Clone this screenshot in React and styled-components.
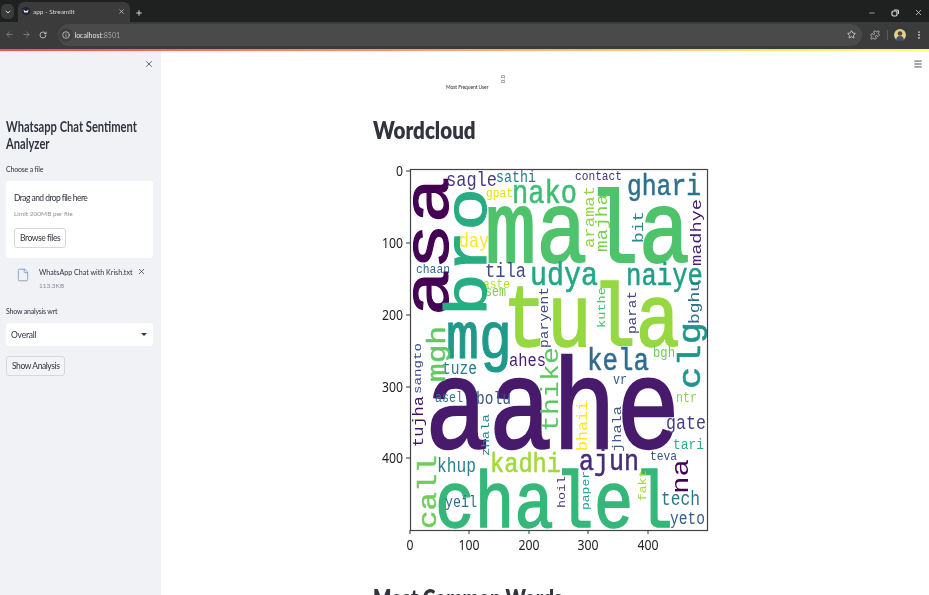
import React from "react";
import styled, { createGlobalStyle, css } from "styled-components";
import { ChevronDown, X, Plus, ArrowLeft, ArrowRight, RotateCw, Info, Star, Puzzle, EllipsisVertical, Minus, File, Menu } from "lucide-react";

const Global = createGlobalStyle`
  html, body { margin: 0; padding: 0; width: 929px; height: 595px; overflow: hidden; background: #fff; }
  * { box-sizing: border-box; }
  body { font-family: "Lato", "Noto Sans", sans-serif; color: #31333f; }
`;
const narrow = css`
  white-space: nowrap; transform-origin: left center; transform: scaleX(${p => p.$sx || 0.86});
`;

const Page = styled.div`
  width: 929px; height: 595px; display: flex; flex-direction: column; overflow: hidden;
`;
const Chrome = styled.div`filter: blur(0.45px); flex: none;`;
const TabStrip = styled.div`
  height: 22px; background: #1f2120; display: flex; align-items: flex-end; color: #d6d6d6;
`;
const TabSearch = styled.div`
  width: 13px; height: 15px; margin: 0 4px 3px 1px; border-radius: 5px; background: #3a3b3b;
  display: flex; align-items: center; justify-content: center;
`;
const Tab = styled.div`
  width: 112px; height: 20px; background: #3b3b3b; border-radius: 6px 6px 0 0;
  display: flex; align-items: center; padding: 0 5px 2px 4px; font-size: 6.5px; color: #d8d8d8;
`;
const Favicon = styled.svg`width: 8px; height: 8px; margin-right: 3px; flex: none;`;
const TabTitle = styled.span`flex: 1;`;
const NewTab = styled.div`margin: 0 0 5px 5px; display: flex;`;
const Spacer = styled.div`flex: 1;`;
const WindowButtons = styled.div`
  display: flex; gap: 15px; margin: 0 6px 5px 0; align-items: center; color: #d8d8d8;
`;
const Toolbar = styled.div`
  height: 27px; background: #3b3b3b; display: flex; align-items: center; padding: 0 5px 2px 4.5px; color: #c4c4c4; gap: 8px;
`;
const NavIcon = styled.span`display: flex; color: ${p => p.$dim ? "#7b7b7b" : "#c8c8c8"};`;
const UrlBar = styled.div`
  flex: 1; height: 22px; margin-left: 3px; background: #4a4a4a; border-radius: 11px;
  display: flex; align-items: center; padding: 0 6px 0 1px; font-size: 7px; color: #e4e4e4; gap: 2px;
`;
const UrlInfo = styled.span`
  width: 14px; height: 14px; border-radius: 50%; background: #3f3f3f; display: flex; align-items: center; justify-content: center;
`;
const UrlPort = styled.span`color: #a9a9a9;`;
const ToolbarDivider = styled.span`width: 1px; height: 10px; background: #5a5a5a; margin: 0 -2px 0 -1px;`;
const Avatar = styled.svg`width: 12px; height: 12px; flex: none;`;
const Decoration = styled.div`
  height: 2px; flex: none; background: linear-gradient(90deg, #ff4b4b, #fffd80);
`;
const Body = styled.div`flex: 1; display: flex; min-height: 0; filter: blur(0.25px);`;

const Sidebar = styled.aside`
  width: 161px; flex: none; background: #f0f2f6; position: relative; padding: 67px 8px 0 6px;
`;
const SideClose = styled.span`position: absolute; top: 8px; left: 144px; display: flex; color: #3a3c46;`;
const AppTitle = styled.h2`
  margin: 0 0 12px; width: 178px; font-size: 14.5px; line-height: 17px; font-weight: 700; color: #31333f;
  transform-origin: left center; transform: scaleX(0.77);
`;
const FieldLabel = styled.div`font-size: 7px; line-height: 10px; color: #31333f; margin-bottom: 7px; letter-spacing: -0.2px;`;
const Dropzone = styled.div`
  background: #fff; border-radius: 3px; height: 77px; padding: 12px 8px 0; margin-bottom: 8px;
`;
const DropTitle = styled.div`font-size: 8.5px; line-height: 11px; color: #31333f; letter-spacing: -0.55px;`;
const DropHint = styled.div`font-size: 6.5px; line-height: 9px; color: #8f919a; margin: 5px 0 10px;`;
const Button = styled.div`
  display: flex; width: fit-content; align-items: center; justify-content: center; height: 20px; padding: 0 5px;
  background: ${p => p.$tint ? "#f3f4f7" : "#fff"}; border: 1px solid #d6d8de; border-radius: 3px; font-size: 8.5px; color: #31333f;
  letter-spacing: -0.42px;
`;
const FileRow = styled.div`display: flex; align-items: flex-start; padding-left: 10px; height: 40px;`;
const FileIcon = styled.span`display: flex; color: #8a9cc2; margin: 2px 0 0 0; width: 23px;`;
const FileInfo = styled.div`flex: 1; min-width: 0;`;
const FileName = styled.div`font-size: 8px; line-height: 12px; color: #31333f; ${narrow}`;
const FileSize = styled.div`font-size: 6.5px; line-height: 10px; color: #8a8c95; margin-top: 3px;`;
const FileClose = styled.span`display: flex; color: #3a3c46; margin: 1px 7px 0 0;`;
const Select = styled.div`
  height: 23px; background: #fff; border-radius: 3px; display: flex; align-items: center; justify-content: space-between;
  padding: 0 6px 0 5px; font-size: 8.5px; color: #31333f; margin-bottom: 10px; letter-spacing: -0.2px;
`;
const Caret = styled.span`
  width: 0; height: 0; border-left: 3px solid transparent; border-right: 3px solid transparent; border-top: 3.5px solid #31333f;
`;

const Main = styled.main`
  flex: 1; position: relative; background: #fff; overflow: hidden; padding: 0 0 0 212px;
`;
const MenuButton = styled.span`position: absolute; top: 8px; right: 6px; display: flex; color: #31333f;`;
const TopChart = styled.div`height: 63px; position: relative;`;
const TopCaption = styled.div`position: absolute; left: 73px; top: 33px; font-size: 5px; line-height: 6px; color: #31333f; white-space: nowrap; letter-spacing: -0.08px;`;
const TopGlyph = styled.div`position: absolute; left: 126px; top: 25px; font-size: 6px; line-height: 6px; color: #555; transform: rotate(-90deg);`;
const Heading = styled.h2`
  margin: 0; font-size: 24px; line-height: 32px; font-weight: 800; color: #31333f; ${narrow}
`;
const ChartSvg = styled.svg`display: block; width: 360px; height: 395px; margin: 14px 0 27px; filter: blur(0.3px);`;

/* [word, left, right, baseline, colour] */
const H = [
  ["mala", 485, 690, 262, "#4ec36b"],
  ["tula", 503, 680, 346, "#95d840"],
  ["aahe", 425, 680, 448, "#481a6c"],
  ["chalel", 435, 673, 527, "#35b779"],
  ["mg", 446, 512, 358, "#1f9a8a"],
  ["nako", 512, 577, 203, "#3dbc74"],
  ["sagle", 446, 497, 186, "#443983"],
  ["sathi", 496, 536, 182, "#2a788e"],
  ["gpat", 486, 513, 197, "#dfe318"],
  ["day", 459, 489, 247, "#fde725"],
  ["contact", 575, 622, 180, "#46337e"],
  ["ghari", 627, 701, 195, "#2c728e"],
  ["udya", 530, 598, 285, "#22a884"],
  ["naiye", 626, 703, 285, "#1f9f88"],
  ["tila", 485, 526, 277, "#3e4989"],
  ["chaan", 416, 450, 273, "#31688e"],
  ["aste", 483, 510, 288, "#b5de2b"],
  ["sem", 485, 506, 296, "#7ad151"],
  ["kela", 587, 649, 370, "#2f6c8e"],
  ["ahes", 509, 546, 366, "#481f70"],
  ["bgh", 653, 675, 357, "#6ccd5a"],
  ["vr", 613, 627, 384, "#3b528b"],
  ["ntr", 676, 697, 402, "#86d549"],
  ["gate", 666, 706, 429, "#433e85"],
  ["tari", 673, 704, 449, "#29af7f"],
  ["teva", 650, 677, 460, "#3b528b"],
  ["ajun", 579, 639, 470, "#472c7a"],
  ["tuze", 442, 477, 374, "#2a788e"],
  ["asel", 435, 463, 402, "#2c7c8e"],
  ["bolu", 476, 511, 404, "#39568c"],
  ["khup", 437, 476, 472, "#26828e"],
  ["kadhi", 490, 561, 472, "#a0da39"],
  ["yeil", 445, 477, 507, "#2f6c8e"],
  ["tech", 661, 700, 505, "#2a788e"],
  ["yeto", 670, 705, 524, "#355f8d"],
];
/* [word, baselineX, bottom, top, colour] */
const V = [
  ["asa", 448, 316, 177, "#440154"],
  ["bro", 486, 316, 188, "#27ad81"],
  ["mgh", 445, 382, 326, "#5ec962"],
  ["aramat", 594, 248, 186, "#8fd744"],
  ["majha", 607, 252, 194, "#7ad151"],
  ["bit", 643, 243, 211, "#2c8a8c"],
  ["madhye", 701, 266, 199, "#482173"],
  ["paryent", 548, 348, 287, "#3f4788"],
  ["kuthe", 605, 328, 287, "#4ac16d"],
  ["parat", 636, 334, 291, "#414487"],
  ["bghu", 699, 324, 281, "#2e6f8e"],
  ["clg", 700, 389, 322, "#1f958b"],
  ["thike", 558, 432, 347, "#5cc863"],
  ["na", 688, 494, 459, "#440154"],
  ["bhaii", 587, 451, 401, "#fde725"],
  ["jhala", 621, 452, 406, "#3f5a8c"],
  ["zhala", 489, 456, 414, "#1f8a8c"],
  ["sangto", 421, 394, 343, "#3f4a8a"],
  ["tujha", 423, 447, 396, "#471365"],
  ["call", 436, 529, 455, "#6ece58"],
  ["hoil", 565, 508, 476, "#46337e"],
  ["paper", 589, 510, 471, "#1f9e89"],
  ["fakt", 646, 501, 470, "#a5db36"],
];
const XT = [[0, 410], [100, 469], [200, 529], [300, 588], [400, 648]];
const YT = [[0, 171], [100, 243], [200, 315], [300, 387], [400, 458]];
const ADV = 0.6, STRETCH = 1.2;
const thicken = fs => (fs > 25 ? fs * 0.018 : 0);
const Cloud = styled.text`font-family: "Liberation Mono", "DejaVu Sans Mono", monospace;`;
const TickLabel = styled.text`font-family: "Noto Sans", "DejaVu Sans", sans-serif; font-size: 14px; fill: #222;`;

const WordChart = () => (
  <ChartSvg viewBox="373 160 360 395">
    <clipPath id="plot"><rect x="410" y="169" width="297" height="361" /></clipPath>
    <g clipPath="url(#plot)">
      {H.map(([w, l, r, b, c]) => {
        const fs = STRETCH * (r - l) / (w.length * ADV);
        return <Cloud key={w} x={l} y={b} fill={c} stroke={c} strokeWidth={thicken(fs)} fontSize={fs} textLength={r - l} lengthAdjust="spacingAndGlyphs">{w}</Cloud>;
      })}
      {V.map(([w, x, bot, top, c]) => {
        const fs = (bot - top) / (w.length * ADV * STRETCH);
        return <Cloud key={w} transform={`rotate(-90 ${x} ${bot})`} x={x} y={bot} fill={c} stroke={c} strokeWidth={thicken(fs)} fontSize={fs} textLength={bot - top} lengthAdjust="spacingAndGlyphs">{w}</Cloud>;
      })}
    </g>
    <rect x="410.5" y="169.5" width="297" height="361" fill="none" stroke="#444" strokeWidth="1.2" />
    {XT.map(([t, x]) => (
      <g key={t}>
        <line x1={x} x2={x} y1="530" y2="534" stroke="#333" />
        <TickLabel x={x} y="550" textAnchor="middle" textLength={String(t).length * 7} lengthAdjust="spacingAndGlyphs">{t}</TickLabel>
      </g>
    ))}
    {YT.map(([t, y]) => (
      <g key={t}>
        <line x1="406" x2="410" y1={y} y2={y} stroke="#333" />
        <TickLabel x="403" y={y + 5} textAnchor="end" textLength={String(t).length * 7} lengthAdjust="spacingAndGlyphs">{t}</TickLabel>
      </g>
    ))}
  </ChartSvg>
);

export default function App() {
  return (
    <Page>
      <Global />
      <Chrome>
        <TabStrip>
          <TabSearch><ChevronDown size={8} strokeWidth={3} /></TabSearch>
          <Tab>
            <Favicon viewBox="0 0 8 8">
              <circle cx="4" cy="4" r="4" fill="#20233a" />
              <path d="M1.500 2.800 4 4.200 6.500 2.800 5.800 5.500H2.200z" fill="#f2f2f6" />
            </Favicon>
            <TabTitle>app - Streamlit</TabTitle>
            <X size={7} strokeWidth={2.5} />
          </Tab>
          <NewTab><Plus size={8} strokeWidth={3} /></NewTab>
          <Spacer />
          <WindowButtons>
            <Minus size={8} strokeWidth={2} />
            <svg width="8" height="8" viewBox="0 0 8 8" fill="none" stroke="currentColor" strokeWidth="1.2"><rect x="1" y="2" width="5" height="5" rx="1.5" /><path d="M3 1h3a1.5 1.5 0 0 1 1.5 1.5V5" /></svg>
            <X size={9} strokeWidth={2} />
          </WindowButtons>
        </TabStrip>
        <Toolbar>
          <NavIcon $dim><ArrowLeft size={9} strokeWidth={2.5} /></NavIcon>
          <NavIcon $dim><ArrowRight size={9} strokeWidth={2.5} /></NavIcon>
          <NavIcon><RotateCw size={8} strokeWidth={2.5} /></NavIcon>
          <UrlBar>
            <UrlInfo><Info size={8} /></UrlInfo>
            <span>localhost<UrlPort>:8501</UrlPort></span>
            <Spacer />
            <Star size={9} strokeWidth={2} />
          </UrlBar>
          <NavIcon><Puzzle size={10} strokeWidth={2} /></NavIcon>
          <ToolbarDivider />
          <Avatar viewBox="0 0 12 12">
            <circle cx="6" cy="6" r="6" fill="#d9d48a" />
            <path d="M2 12c0-3.500 1.500-5 4-5s4 1.500 4 5z" fill="#43506a" />
            <circle cx="6" cy="4.500" r="2.300" fill="#6b3d2a" />
          </Avatar>
          <NavIcon><EllipsisVertical size={10} strokeWidth={2.5} /></NavIcon>
        </Toolbar>
      </Chrome>
      <Decoration />
      <Body>
        <Sidebar>
          <SideClose><X size={10} strokeWidth={1.8} /></SideClose>
          <AppTitle>Whatsapp Chat Sentiment Analyzer</AppTitle>
          <FieldLabel>Choose a file</FieldLabel>
          <Dropzone>
            <DropTitle>Drag and drop file here</DropTitle>
            <DropHint>Limit 200MB per file</DropHint>
            <Button>Browse files</Button>
          </Dropzone>
          <FileRow>
            <FileIcon><File size={14} strokeWidth={1.6} /></FileIcon>
            <FileInfo>
              <FileName $sx={0.89}>WhatsApp Chat with Krish.txt</FileName>
              <FileSize>113.3KB</FileSize>
            </FileInfo>
            <FileClose><X size={9} strokeWidth={2} /></FileClose>
          </FileRow>
          <FieldLabel>Show analysis wrt</FieldLabel>
          <Select>Overall<Caret /></Select>
          <Button $tint>Show Analysis</Button>
        </Sidebar>
        <Main>
          <MenuButton><Menu size={10} strokeWidth={2} /></MenuButton>
          <TopChart>
            <TopGlyph>0.0</TopGlyph>
            <TopCaption>Most Frequent User</TopCaption>
          </TopChart>
          <Heading $sx={0.855}>Wordcloud</Heading>
          <WordChart />
          <Heading $sx={0.8}>Most Common Words</Heading>
        </Main>
      </Body>
    </Page>
  );
}
